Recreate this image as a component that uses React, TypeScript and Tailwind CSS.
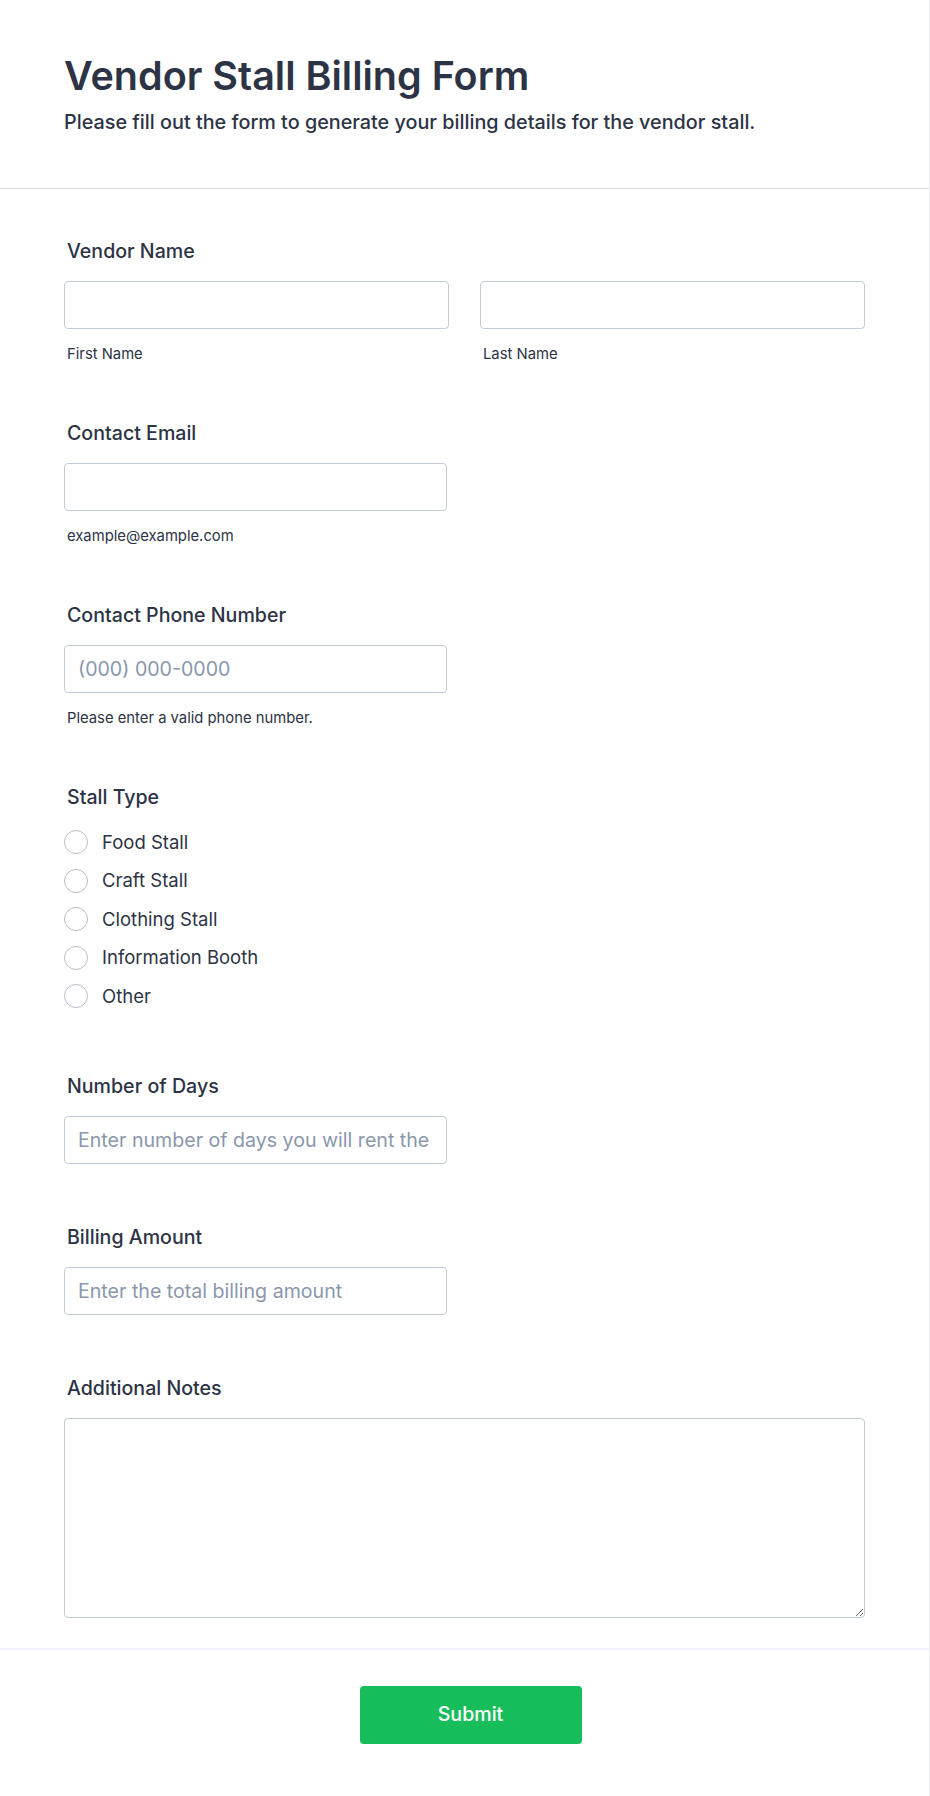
import React from 'react';

const stallTypes = ['Food Stall', 'Craft Stall', 'Clothing Stall', 'Information Booth', 'Other'];

const inputCls =
  'block h-[48px] rounded-[4px] border border-[#c3cad8] bg-white pl-[13px] pr-3 text-[19.6px] text-[#2c3345] placeholder:text-[#8a97ad] outline-none';

function Label({ children }: { children: React.ReactNode }) {
  return <label className="block pl-[3px] text-[19.6px] leading-[27px] font-medium text-[#2c3345]">{children}</label>;
}

function SubLabel({ children }: { children: React.ReactNode }) {
  return <span className="mt-[14px] block pl-[3px] text-[14.8px] leading-[22px] text-[#2c3345]">{children}</span>;
}

export default function App() {
  return (
    <div className="min-h-[1796px] w-[930px] bg-white border-r border-[#ececf6] font-['Inter','Liberation_Sans',sans-serif] text-[#2c3345]">
      {/* Header */}
      <div className="border-b border-[#dadde8] px-16 pt-[52px] pb-[52px]">
        <h1 className="text-[39.5px] leading-[48px] font-semibold">Vendor Stall Billing Form</h1>
        <p className="mt-[9px] text-[19.8px] leading-[27px] font-medium">
          Please fill out the form to generate your billing details for the vendor stall.
        </p>
      </div>

      {/* Fields */}
      <div className="flex flex-col px-16 pt-[49px]">
        <div className="mb-[55px]">
          <Label>Vendor Name</Label>
          <div className="mt-4 grid grid-cols-2 gap-[31px]">
            <div>
              <input type="text" className={`${inputCls} w-full`} />
              <SubLabel>First Name</SubLabel>
            </div>
            <div>
              <input type="text" className={`${inputCls} w-full`} />
              <SubLabel>Last Name</SubLabel>
            </div>
          </div>
        </div>

        <div className="mb-[55px]">
          <Label>Contact Email</Label>
          <input type="email" className={`${inputCls} mt-4 w-[383px]`} />
          <SubLabel>example@example.com</SubLabel>
        </div>

        <div className="mb-[55px]">
          <Label>Contact Phone Number</Label>
          <input type="tel" placeholder="(000) 000-0000" className={`${inputCls} mt-4 w-[383px]`} />
          <SubLabel>Please enter a valid phone number.</SubLabel>
        </div>

        <div className="mb-[57px]">
          <Label>Stall Type</Label>
          <div className="mt-[12px] flex flex-col">
            {stallTypes.map((t) => (
              <label key={t} className="flex h-[38.5px] items-center gap-[14px]">
                <span className="h-6 w-6 rounded-full border border-[#b8bdc9] bg-white" />
                <span className="text-[18.5px] leading-[27px] text-[#2c3345]">{t}</span>
              </label>
            ))}
          </div>
        </div>

        <div className="mb-[60px]">
          <Label>Number of Days</Label>
          <input
            type="text"
            placeholder="Enter number of days you will rent the stall"
            className={`${inputCls} mt-4 w-[383px]`}
          />
        </div>

        <div className="mb-[60px]">
          <Label>Billing Amount</Label>
          <input type="text" placeholder="Enter the total billing amount" className={`${inputCls} mt-4 w-[383px]`} />
        </div>

        <div className="mb-[30px]">
          <Label>Additional Notes</Label>
          <textarea className="mt-4 block h-[200px] w-full rounded-[4px] border border-[#c3cad8] bg-white p-3 text-[18px] outline-none" />
        </div>
      </div>

      {/* Footer */}
      <div className="flex justify-center border-t-2 border-[#f3f3fe] pt-9 pb-[50px] pl-[12px]">
        <button className="h-[58px] w-[222px] rounded-[4px] bg-[#18bd5b] text-[19.6px] font-medium text-white">
          Submit
        </button>
      </div>
    </div>
  );
}
